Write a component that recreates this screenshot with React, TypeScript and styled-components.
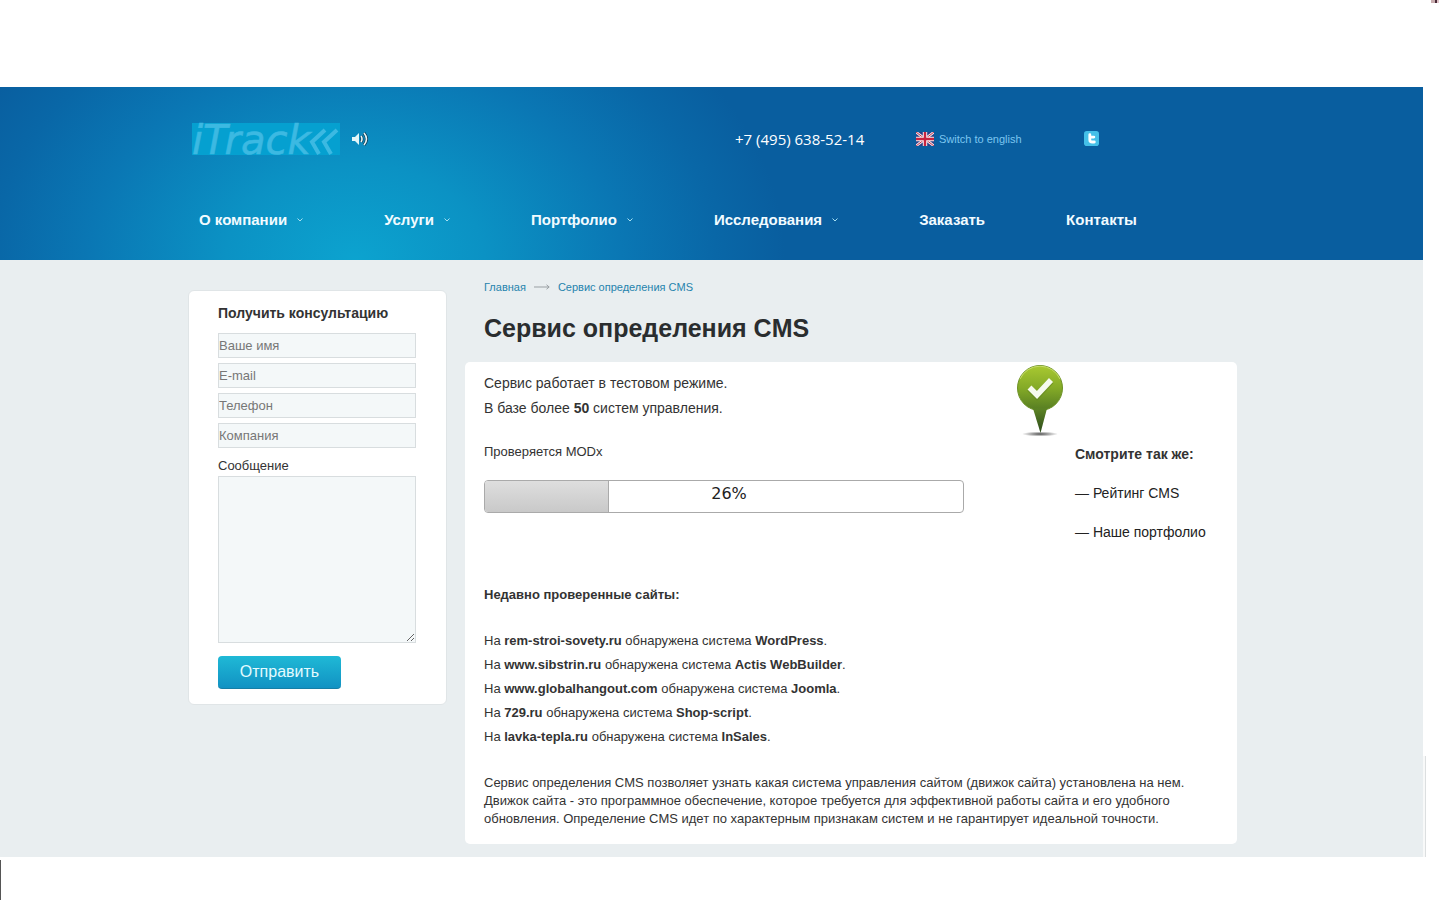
import React from "react";
import styled, { createGlobalStyle } from "styled-components";

const GlobalStyle = createGlobalStyle`
  *, *::before, *::after { box-sizing: border-box; }
  body {
    margin: 0;
    background: #fff;
    color: #333;
    font-family: "Liberation Sans", Arial, sans-serif;
    font-size: 13px;
    line-height: 18px;
  }
  a { color: inherit; text-decoration: none; }
  h1, h2, p, ul { margin: 0; padding: 0; }
  ul { list-style: none; }
`;

const Screen = styled.div`
  display: flex;
  flex-direction: column;
  min-height: 100vh;
`;

const TopStrip = styled.div`
  display: flex;
  justify-content: flex-end;
  align-items: flex-start;
  height: 87px;
`;

const Speck = styled.span`
  width: 8px;
  height: 3px;
  margin-right: 1px;
  background: linear-gradient(90deg, #c9aeb0 0 4px, #4a2b38 4px 6px, #e2c6cb 6px);
`;

const PageRow = styled.div`
  display: flex;
  margin-right: 14px;
`;

const Page = styled.div`
  flex: 1;
  min-width: 0;
  background: #e9eef0;
`;

const ScrollEdge = styled.div`
  align-self: flex-end;
  width: 3px;
  height: 101px;
  border-right: 1px solid #dcdfe0;
  background: #f8f9f9;
`;

const Footer = styled.footer`
  flex: 1;
  margin-top: 3px;
  border-left: 1px solid #555;
`;

const Container = styled.div`
  max-width: 1051px;
  margin: 0 auto;
  padding-left: 2px;
`;

const Header = styled.header`
  height: 173px;
  background: radial-gradient(
    ellipse 430px 320px at 355px 100%,
    #0ca3cf 0%,
    #0b92c4 30%,
    #0a77b4 62%,
    #0967a7 84%,
    #095e9f 100%
  );
`;

const HeaderBar = styled.div`
  display: flex;
  align-items: center;
  height: 104px;
  padding-left: 4px;
`;

const Brand = styled.div`
  display: flex;
  align-items: center;
  gap: 12px;
  flex: 0 0 543px;
  svg { display: block; }
`;

const Phone = styled.span`
  flex: 0 0 181px;
  color: #fff;
  font-family: "Open Sans", sans-serif;
  font-size: 15px;
`;

const Language = styled.a`
  display: flex;
  align-items: center;
  gap: 5px;
  flex: 0 0 168px;
  color: #7cc6f0;
  font-size: 11px;
`;

const Social = styled.a`
  display: block;
  height: 16px;
`;

const Nav = styled.nav`
  display: flex;
  gap: 81px;
  padding: 20px 0 0 11px;
`;

const NavLink = styled.a`
  display: flex;
  align-items: center;
  gap: 10px;
  color: #f2fbff;
  font-size: 15px;
  font-weight: bold;
  white-space: nowrap;
`;

const Columns = styled(Container)`
  display: flex;
  align-items: flex-start;
  gap: 18px;
  padding-bottom: 13px;
`;

const FormCard = styled.form`
  display: flex;
  flex-direction: column;
  flex: 0 0 259px;
  margin-top: 30px;
  padding: 13px 30px 15px 29px;
  border: 1px solid #e0e5e7;
  border-radius: 6px;
  background: #fff;
`;

const FormTitle = styled.h2`
  margin-bottom: 11px;
  font-size: 14px;
  line-height: 18px;
`;

const Field = styled.input`
  width: 100%;
  height: 25px;
  margin-bottom: 5px;
  padding: 0;
  border: 1px solid #d8dddf;
  border-radius: 0;
  background: #f4f8f9;
  color: #333;
  font: 13px "Liberation Sans", Arial, sans-serif;
  &::placeholder { color: #777; opacity: 1; }
`;

const FieldLabel = styled.label`
  margin: 4px 0 1px;
`;

const Message = styled.textarea`
  width: 100%;
  height: 167px;
  padding: 2px;
  border: 1px solid #d8dddf;
  background: #f4f8f9;
  resize: both;
`;

const Submit = styled.button`
  align-self: flex-start;
  width: 123px;
  height: 33px;
  margin-top: 13px;
  padding: 0;
  border: 0;
  border-bottom: 1px solid #157ea6;
  border-radius: 4px;
  background: linear-gradient(#1fb9d6, #1192c3);
  color: #e4fbff;
  font: 16px "Liberation Sans", Arial, sans-serif;
`;

const Content = styled.main`
  flex: 1;
  min-width: 0;
`;

const Crumbs = styled.nav`
  display: flex;
  align-items: center;
  gap: 8px;
  padding: 18px 19px 0;
  color: #2583ad;
  font-size: 11px;
`;

const Title = styled.h1`
  padding: 17px 19px 19px;
  color: #2a2d2f;
  font-size: 25px;
  line-height: 30px;
`;

const Panel = styled.section`
  padding: 3px 19px 16px;
  border-radius: 5px;
  background: #fff;
`;

const PanelTop = styled.div`
  display: flex;
  justify-content: space-between;
`;

const Status = styled.div`
  flex: 0 1 480px;
  padding-top: 6px;
`;

const Lead = styled.p`
  font-size: 14px;
  line-height: 25px;
`;

const Checking = styled.p`
  margin: 22px 0 19px;
`;

const Progress = styled.div`
  display: grid;
  height: 33px;
  border: 1px solid #aaa;
  border-radius: 4px;
  overflow: hidden;
`;

const ProgressFill = styled.div`
  grid-area: 1 / 1;
  border-right: 1px solid #aaa;
  background: linear-gradient(#dedede, #c9c9c9);
`;

const ProgressText = styled.span`
  grid-area: 1 / 1;
  padding: 4px 0 0 10px;
  color: #222;
  font-family: "DejaVu Sans", Verdana, sans-serif;
  font-size: 16px;
  text-align: center;
`;

const Aside = styled.aside`
  flex: 0 0 203px;
`;

const SeeAlso = styled.div`
  display: flex;
  flex-direction: column;
  gap: 21px;
  padding: 6px 0 1px 60px;
  color: #222;
  font-size: 14px;
  white-space: nowrap;
`;

const SeeAlsoTitle = styled.h2`
  color: #333;
  font-size: 14px;
  line-height: 18px;
`;

const RecentTitle = styled.h2`
  margin: 44px 0 25px;
  font-size: 13px;
  line-height: 18px;
`;

const Recent = styled.ul`
  line-height: 24px;
`;

const About = styled.p`
  max-width: 710px;
  margin-top: 25px;
`;

const Logo = () => (
  <svg width="148" height="32" viewBox="0 0 148 32" overflow="visible" role="img" aria-label="iTrack">
    <rect width="148" height="32" fill="#05a0d0" />
    <text
      x="0"
      y="31"
      fill="#3cb9e2"
      stroke="#3cb9e2"
      strokeWidth=".6"
      fontFamily="DejaVu Sans, sans-serif"
      fontStyle="italic"
      fontSize="40"
    >
      iTrack
    </text>
    <path d="M133 7L120 19L127 31M145 7L132 19L139 31" fill="none" stroke="#3cb9e2" strokeWidth="4" />
  </svg>
);

const Speaker = () => (
  <svg width="16" height="14" viewBox="0 0 16 14" aria-hidden="true">
    <path d="M0 5h3l4-4v12l-4-4H0z" fill="#e4f6f8" />
    <path d="M9 4q2 3 0 6M12 1q5 6 0 12" fill="none" stroke="#12384f" strokeWidth="3" />
    <path d="M9 4q2 3 0 6M12 1q5 6 0 12" fill="none" stroke="#e4f6f8" strokeWidth="1.6" />
  </svg>
);

const Flag = () => (
  <svg width="18" height="14" viewBox="0 0 18 14" aria-hidden="true">
    <rect width="18" height="14" fill="#2b3f86" />
    <path d="M0 0l18 14M18 0L0 14" stroke="#f0e8ee" strokeWidth="2.6" />
    <path d="M0 0l18 14M18 0L0 14" stroke="#c8324a" strokeWidth="1" />
    <path d="M9 0v14M0 7h18" stroke="#f5eef2" strokeWidth="4.4" />
    <path d="M9 0v14M0 7h18" stroke="#c8243f" strokeWidth="2.4" />
  </svg>
);

const Twitter = () => (
  <svg width="15" height="15" viewBox="0 0 16 16" aria-hidden="true">
    <rect width="16" height="16" rx="3" fill="#45c0e8" />
    <path d="M6.2 4v5.2q0 2.500 2.600 2.500H11M6.2 6.500H10.500" fill="none" stroke="#fff" strokeWidth="3" strokeLinecap="round" />
  </svg>
);

const Chevron = () => (
  <svg width="6" height="4" viewBox="0 0 6 4" aria-hidden="true">
    <path d="M.5 .5L3 3L5.5 .5" fill="none" stroke="#a5e0f2" />
  </svg>
);

const Arrow = () => (
  <svg width="16" height="6" viewBox="0 0 16 6" aria-hidden="true">
    <path d="M0 3h15M12.500 .8L15.200 3L12.500 5.200" fill="none" stroke="#999fa3" />
  </svg>
);

const Pin = () => (
  <svg width="50" height="74" viewBox="0 0 50 74" aria-hidden="true" display="block">
    <defs>
      <linearGradient id="ball" x1="0" y1="0" x2="0" y2="1">
        <stop offset="0" stopColor="#a9c931" />
        <stop offset=".5" stopColor="#84aa27" />
        <stop offset="1" stopColor="#557c22" />
      </linearGradient>
      <linearGradient id="spike" x1="0" y1="0" x2="0" y2="1">
        <stop offset="0" stopColor="#5d8424" />
        <stop offset="1" stopColor="#2c4a1c" />
      </linearGradient>
      <radialGradient id="shade">
        <stop offset="0" stopColor="#333" stopOpacity=".85" />
        <stop offset="1" stopColor="#333" stopOpacity="0" />
      </radialGradient>
    </defs>
    <ellipse cx="25" cy="69" rx="18" ry="2.500" fill="url(#shade)" />
    <circle cx="25" cy="23" r="22.500" fill="url(#ball)" stroke="#6c9125" />
    <path d="M18 43.500h14L25.500 68z" fill="url(#spike)" />
    <path d="M5 14A22 22 0 0 1 45 14" fill="none" stroke="#c7dd6a" strokeWidth="1" />
    <path d="M14.500 23.500L22 31L36 16" fill="none" stroke="#5d8020" strokeOpacity=".5" strokeWidth="6.500" />
    <path d="M14.500 22.500L22 30L36 15" fill="none" stroke="#f6faee" strokeWidth="5.500" />
  </svg>
);

const menu = [
  { label: "О компании", sub: true },
  { label: "Услуги", sub: true },
  { label: "Портфолио", sub: true },
  { label: "Исследования", sub: true },
  { label: "Заказать", sub: false },
  { label: "Контакты", sub: false },
];

const fields = [
  { name: "name", type: "text", label: "Ваше имя" },
  { name: "email", type: "email", label: "E-mail" },
  { name: "phone", type: "tel", label: "Телефон" },
  { name: "company", type: "text", label: "Компания" },
];

const recent = [
  ["rem-stroi-sovety.ru", "WordPress"],
  ["www.sibstrin.ru", "Actis WebBuilder"],
  ["www.globalhangout.com", "Joomla"],
  ["729.ru", "Shop-script"],
  ["lavka-tepla.ru", "InSales"],
];

const progress = 26;

export default function App() {
  return (
    <Screen>
      <GlobalStyle />
      <TopStrip>
        <Speck />
      </TopStrip>
      <PageRow>
        <Page>
          <Header>
            <Container>
              <HeaderBar>
                <Brand>
                  <a href="#home"><Logo /></a>
                  <Speaker />
                </Brand>
                <Phone>+7 (495) 638-52-14</Phone>
                <Language href="#en"><Flag />Switch to english</Language>
                <Social href="#twitter" aria-label="Twitter"><Twitter /></Social>
              </HeaderBar>
              <Nav>
                {menu.map((item) => (
                  <NavLink key={item.label} href="#menu">
                    {item.label}
                    {item.sub && <Chevron />}
                  </NavLink>
                ))}
              </Nav>
            </Container>
          </Header>
          <Columns>
            <FormCard>
              <FormTitle>Получить консультацию</FormTitle>
              {fields.map((f) => (
                <Field key={f.name} name={f.name} type={f.type} placeholder={f.label} aria-label={f.label} />
              ))}
              <FieldLabel htmlFor="message">Сообщение</FieldLabel>
              <Message id="message" name="message" />
              <Submit type="submit">Отправить</Submit>
            </FormCard>
            <Content>
              <Crumbs>
                <a href="#home">Главная</a>
                <Arrow />
                <a href="#cms">Сервис определения CMS</a>
              </Crumbs>
              <Title>Сервис определения CMS</Title>
              <Panel>
                <PanelTop>
                  <Status>
                    <Lead>Сервис работает в тестовом режиме.</Lead>
                    <Lead>В базе более <b>50</b> систем управления.</Lead>
                    <Checking>Проверяется MODx</Checking>
                    <Progress role="progressbar" aria-valuenow={progress} aria-valuemin={0} aria-valuemax={100}>
                      <ProgressFill style={{ width: `${progress}%` }} />
                      <ProgressText>{progress}%</ProgressText>
                    </Progress>
                  </Status>
                  <Aside>
                    <Pin />
                    <SeeAlso>
                      <SeeAlsoTitle>Смотрите так же:</SeeAlsoTitle>
                      <a href="#rating">— Рейтинг CMS</a>
                      <a href="#portfolio">— Наше портфолио</a>
                    </SeeAlso>
                  </Aside>
                </PanelTop>
                <RecentTitle>Недавно проверенные сайты:</RecentTitle>
                <Recent>
                  {recent.map(([site, cms]) => (
                    <li key={site}>На <b>{site}</b> обнаружена система <b>{cms}</b>.</li>
                  ))}
                </Recent>
                <About>
                  Сервис определения CMS позволяет узнать какая система управления сайтом (движок сайта)
                  установлена на нем. Движок сайта - это программное обеспечение, которое требуется для
                  эффективной работы сайта и его удобного обновления. Определение CMS идет по характерным
                  признакам систем и не гарантирует идеальной точности.
                </About>
              </Panel>
            </Content>
          </Columns>
        </Page>
        <ScrollEdge />
      </PageRow>
      <Footer />
    </Screen>
  );
}
